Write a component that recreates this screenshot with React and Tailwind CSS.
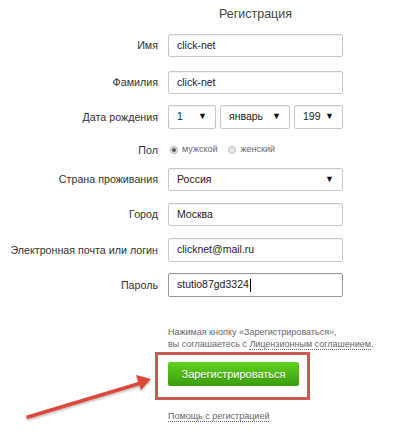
import React from 'react';

const labelCls = 'w-[158px] shrink-0 text-right text-[10.7px] text-[#333] leading-none';
const inputCls =
  'w-[175px] border border-[#c8c8c8] rounded-[2px] bg-white flex items-center px-[8px] text-[10.5px] text-[#222] shadow-[inset_0_1px_1px_rgba(0,0,0,0.06)]';

const Row = ({ label, className = '', children }) => (
  <div className={`flex items-center gap-[10px] ${className}`}>
    <div className={labelCls}>{label}</div>
    {children}
  </div>
);

const Select = ({ value, className = '' }) => (
  <div className={`${inputCls} justify-between ${className}`}>
    <span>{value}</span>
    <span className="text-[9px] text-[#111]">▼</span>
  </div>
);

export default function App() {
  return (
    <div className="relative w-[404px] h-[432px] bg-white overflow-hidden font-['Liberation_Sans',Arial,sans-serif]">
      <div className="flex flex-col">
        {/* Title */}
        <div className="flex mt-[6px] h-[16px] items-center">
          <div className="w-[168px] shrink-0" />
          <div className="w-[175px] text-center text-[12.5px] text-[#444]">Регистрация</div>
        </div>

        <Row label="Имя" className="mt-[12px]">
          <div className={`${inputCls} h-[23px]`}>click-net</div>
        </Row>

        <Row label="Фамилия" className="mt-[14px]">
          <div className={`${inputCls} h-[23px]`}>click-net</div>
        </Row>

        <Row label="Дата рождения" className="mt-[11px]">
          <div className="flex gap-[4px]">
            <Select value="1" className="!w-[48px] h-[24px]" />
            <Select value="январь" className="!w-[70px] h-[24px]" />
            <Select value="199" className="!w-[49px] h-[24px]" />
          </div>
        </Row>

        <Row label="Пол" className="mt-[15px] h-[12px]">
          <div className="flex items-center text-[9px] text-[#666]">
            <span className="w-[8px] h-[8px] ml-[2px] rounded-full border border-[#aaa] bg-[#eee] flex items-center justify-center">
              <span className="w-[4px] h-[4px] rounded-full bg-[#555]" />
            </span>
            <span className="ml-[4px]">мужской</span>
            <span className="w-[8px] h-[8px] ml-[11px] rounded-full border border-[#bbb] bg-[#e6e6e6]" />
            <span className="ml-[4px]">женский</span>
          </div>
        </Row>

        <Row label="Страна проживания" className="mt-[12px]">
          <Select value="Россия" className="h-[23px]" />
        </Row>

        <Row label="Город" className="mt-[12px]">
          <div className={`${inputCls} h-[23px]`}>Москва</div>
        </Row>

        <Row label="Электронная почта или логин" className="mt-[12px]">
          <div className={`${inputCls} h-[24px]`}>clicknet@mail.ru</div>
        </Row>

        <Row label="Пароль" className="mt-[11px]">
          <div className={`${inputCls} h-[24px] !border-[#999]`}>
            stutio87gd3324
            <span className="inline-block w-[1px] h-[13px] bg-black ml-[1px]" />
          </div>
        </Row>

        {/* Agreement */}
        <div className="ml-[168px] mt-[29px] text-[9px] leading-[12px] text-[#666]">
          <div>Нажимая кнопку «Зарегистрироваться»,</div>
          <div>
            вы соглашаетесь с{' '}
            <span className="border-b border-dotted border-[#666]">Лицензионным соглашением</span>.
          </div>
        </div>

        {/* Highlighted button */}
        <div className="ml-[155px] mt-[2px] w-[155px] h-[48px] border-[3px] border-[#cd5a52] pt-[7px] pl-[10px]">
          <div className="w-[131px] h-[24px] rounded-[2px] bg-gradient-to-b from-[#62d11f] to-[#3a9d0c] flex items-center justify-center text-white text-[11px] [text-shadow:0_1px_0_rgba(0,0,0,0.2)]">
            Зарегистрироваться
          </div>
        </div>

        {/* Help */}
        <div className="ml-[168px] mt-[10px] leading-[12px] text-[9px] text-[#666]">
          <span className="border-b border-dotted border-[#666]">Помощь с регистрацией</span>
        </div>
      </div>

      {/* Red arrow overlay */}
      <svg className="absolute left-0 top-0" width="404" height="432" viewBox="0 0 404 432">
        <defs>
          <filter id="sh" x="-10%" y="-50%" width="120%" height="200%">
            <feDropShadow dx="0" dy="1.5" stdDeviation="1.2" floodColor="#000" floodOpacity="0.3" />
          </filter>
        </defs>
        <g filter="url(#sh)">
          <line x1="28" y1="417" x2="141" y2="383" stroke="#dc4a3b" strokeWidth="3.5" strokeLinecap="round" />
          <polygon points="151,379 136,375 141,390" fill="#dc4a3b" />
        </g>
      </svg>
    </div>
  );
}
